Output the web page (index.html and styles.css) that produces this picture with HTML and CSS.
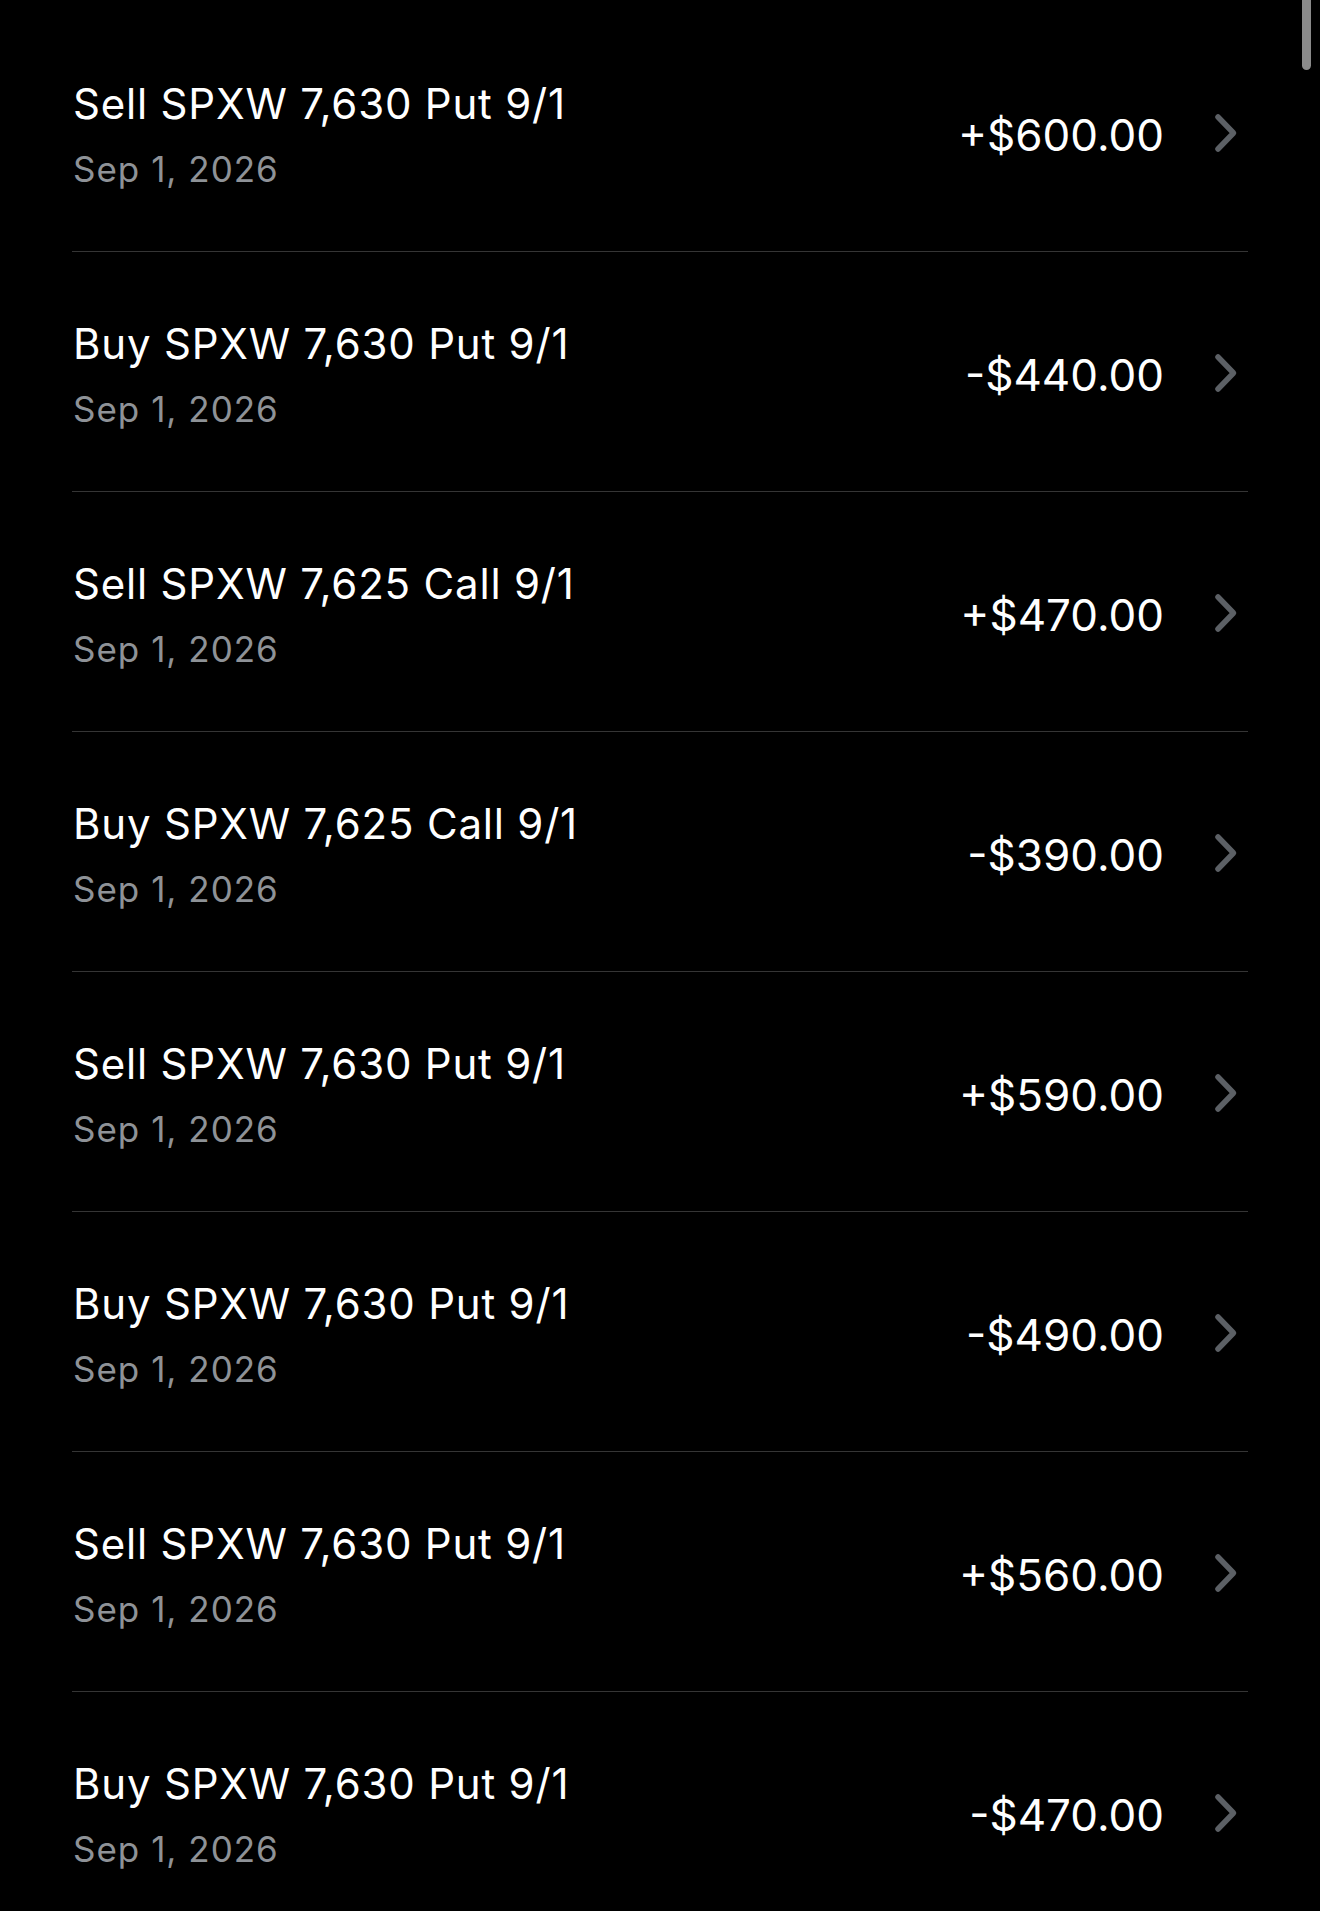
FILE: index.html
```html
<!DOCTYPE html>
<html lang="en">
<head>
  <meta charset="UTF-8">
  <meta name="viewport" content="width=device-width, initial-scale=1.0">
  <title>Activity</title>
  <link rel="stylesheet" href="styles.css">
</head>
<body>
  <div class="scroll-thumb"></div>

  <ul class="orders">
    <li class="order">
      <div class="info">
        <div class="title">Sell SPXW 7,630 Put 9/1</div>
        <div class="date">Sep 1, 2026</div>
      </div>
      <div class="amount">+$600.00</div>
      <svg class="chevron" viewBox="0 0 24 40"><polyline points="4,4 19.5,20 4,36"/></svg>
    </li>
    <li class="order">
      <div class="info">
        <div class="title">Buy SPXW 7,630 Put 9/1</div>
        <div class="date">Sep 1, 2026</div>
      </div>
      <div class="amount">-$440.00</div>
      <svg class="chevron" viewBox="0 0 24 40"><polyline points="4,4 19.5,20 4,36"/></svg>
    </li>
    <li class="order">
      <div class="info">
        <div class="title">Sell SPXW 7,625 Call 9/1</div>
        <div class="date">Sep 1, 2026</div>
      </div>
      <div class="amount">+$470.00</div>
      <svg class="chevron" viewBox="0 0 24 40"><polyline points="4,4 19.5,20 4,36"/></svg>
    </li>
    <li class="order">
      <div class="info">
        <div class="title">Buy SPXW 7,625 Call 9/1</div>
        <div class="date">Sep 1, 2026</div>
      </div>
      <div class="amount">-$390.00</div>
      <svg class="chevron" viewBox="0 0 24 40"><polyline points="4,4 19.5,20 4,36"/></svg>
    </li>
    <li class="order">
      <div class="info">
        <div class="title">Sell SPXW 7,630 Put 9/1</div>
        <div class="date">Sep 1, 2026</div>
      </div>
      <div class="amount">+$590.00</div>
      <svg class="chevron" viewBox="0 0 24 40"><polyline points="4,4 19.5,20 4,36"/></svg>
    </li>
    <li class="order">
      <div class="info">
        <div class="title">Buy SPXW 7,630 Put 9/1</div>
        <div class="date">Sep 1, 2026</div>
      </div>
      <div class="amount">-$490.00</div>
      <svg class="chevron" viewBox="0 0 24 40"><polyline points="4,4 19.5,20 4,36"/></svg>
    </li>
    <li class="order">
      <div class="info">
        <div class="title">Sell SPXW 7,630 Put 9/1</div>
        <div class="date">Sep 1, 2026</div>
      </div>
      <div class="amount">+$560.00</div>
      <svg class="chevron" viewBox="0 0 24 40"><polyline points="4,4 19.5,20 4,36"/></svg>
    </li>
    <li class="order">
      <div class="info">
        <div class="title">Buy SPXW 7,630 Put 9/1</div>
        <div class="date">Sep 1, 2026</div>
      </div>
      <div class="amount">-$470.00</div>
      <svg class="chevron" viewBox="0 0 24 40"><polyline points="4,4 19.5,20 4,36"/></svg>
    </li>
  </ul>
</body>
</html>
```

FILE: styles.css
```css
* {
  margin: 0;
  padding: 0;
  box-sizing: border-box;
}

html {
  overflow: hidden;
}

body {
  font-family: Inter, "Noto Sans", sans-serif;
  background: #000;
  color: #fff;
  min-height: 100vh;
}

.scroll-thumb {
  position: fixed;
  top: -6px;
  right: 9px;
  width: 9px;
  height: 76px;
  border-radius: 5px;
  background: #8a8a8a;
}

.orders {
  list-style: none;
  padding: 12px 72px 0;
}

.order {
  height: 240px;
  display: flex;
  align-items: center;
  border-bottom: 1px solid #353535;
  padding: 0 10px 4px 1px;
}

.info {
  flex: 1;
  display: flex;
  flex-direction: column;
  padding-top: 10px;
}

.title {
  font-size: 42px;
  line-height: 50px;
  letter-spacing: 0.8px;
  color: #fff;
}

.date {
  font-size: 35px;
  line-height: 42px;
  letter-spacing: 1px;
  margin-top: 19px;
  color: #8e9297;
}

.amount {
  font-size: 44px;
  line-height: 54px;
  margin-top: 11px;
  color: #fff;
}

.chevron {
  width: 24px;
  height: 40px;
  margin-left: 50px;
  margin-top: 7px;
  fill: none;
  stroke: #5c6065;
  stroke-width: 5.5;
  stroke-linecap: round;
  stroke-linejoin: round;
}
```
